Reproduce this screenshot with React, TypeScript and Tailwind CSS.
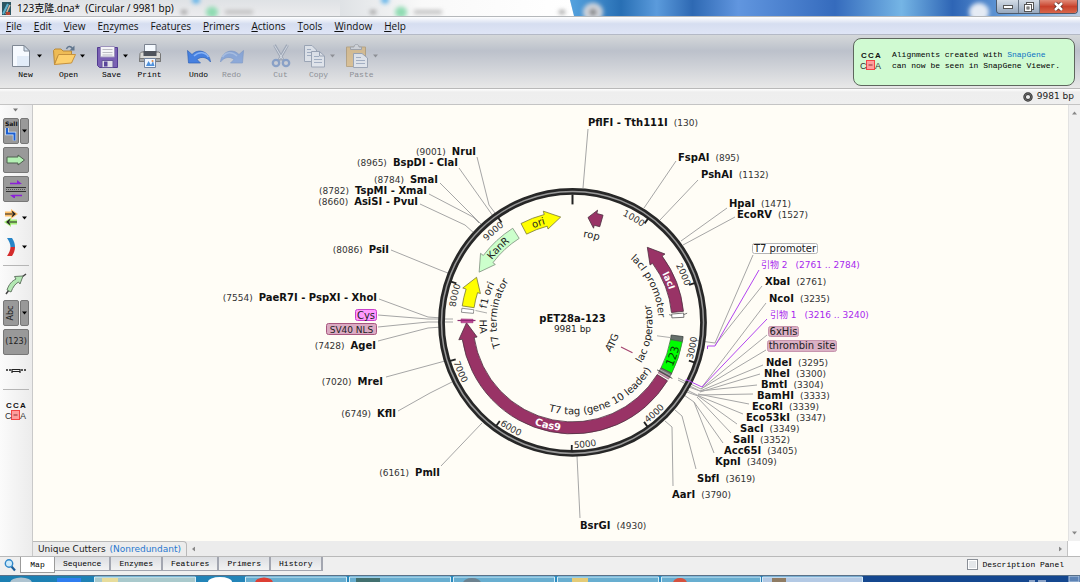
import React from "react";

/* ---------- plasmid geometry ---------- */

const CX = 572.5;
const CY = 322.4;
const TOTAL = 9981;

function pt(r: number, deg: number): [number, number] {
  const a = (deg * Math.PI) / 180;
  return [CX + r * Math.sin(a), CY - r * Math.cos(a)];
}

function p(r: number, deg: number): string {
  const [x, y] = pt(r, deg);
  return `${x.toFixed(2)} ${y.toFixed(2)}`;
}

function bandPath(a0: number, a1: number, r0 = 99.5, r1 = 111.5): string {
  const large = Math.abs(a1 - a0) > 180 ? 1 : 0;
  return `M${p(r1, a0)}A${r1} ${r1} 0 ${large} 1 ${p(r1, a1)}L${p(r0, a1)}A${r0} ${r0} 0 ${large} 0 ${p(r0, a0)}Z`;
}

function arrowPath(tail: number, tip: number, head: number): string {
  const cw = tip > tail;
  const neck = cw ? tip - head : tip + head;
  const s = cw ? 1 : 0;
  const b = cw ? 0 : 1;
  return [
    `M${p(111.5, tail)}`,
    `A111.5 111.5 0 0 ${s} ${p(111.5, neck)}`,
    `L${p(115, neck)}`,
    `L${p(106, tip)}`,
    `L${p(96.5, neck)}`,
    `L${p(99.5, neck)}`,
    `A99.5 99.5 0 0 ${b} ${p(99.5, tail)}`,
    "Z",
  ].join("");
}

type ArcTextProps = {
  id: string;
  r: number;
  at: number;
  ccw?: boolean;
  anchor?: "start" | "middle" | "end";
  size?: number;
  fill?: string;
  bold?: boolean;
  children: string;
};

function ArcText({ id, r, at, ccw, anchor = "middle", size = 10, fill = "#222", bold, children }: ArcTextProps) {
  const d = ccw
    ? `M${p(r, at + 70)}A${r} ${r} 0 0 0 ${p(r, at - 70)}`
    : `M${p(r, at - 70)}A${r} ${r} 0 0 1 ${p(r, at + 70)}`;
  return (
    <>
      <path id={id} d={d} fill="none" />
      <text fontSize={size} fill={fill} fontWeight={bold ? 700 : 400} textAnchor={anchor}>
        <textPath href={`#${id}`} startOffset="50%">
          {children}
        </textPath>
      </text>
    </>
  );
}

/* ---------- map data ---------- */

const ticks = [1000, 2000, 3000, 4000, 5000, 6000, 7000, 8000, 9000];

type Site = { name: string; pos: string; x: number; y: number };

const rightSites: Site[] = [
  { name: "PflFI - Tth111I", pos: "(130)", x: 588, y: 126 },
  { name: "FspAI", pos: "(895)", x: 678, y: 161 },
  { name: "PshAI", pos: "(1132)", x: 701, y: 178 },
  { name: "HpaI", pos: "(1471)", x: 729, y: 207 },
  { name: "EcoRV", pos: "(1527)", x: 737, y: 218 },
  { name: "XbaI", pos: "(2761)", x: 765, y: 285 },
  { name: "NcoI", pos: "(3235)", x: 769, y: 302 },
  { name: "NdeI", pos: "(3295)", x: 766, y: 366 },
  { name: "NheI", pos: "(3300)", x: 764, y: 377 },
  { name: "BmtI", pos: "(3304)", x: 761, y: 388 },
  { name: "BamHI", pos: "(3333)", x: 757, y: 399 },
  { name: "EcoRI", pos: "(3339)", x: 752, y: 410 },
  { name: "Eco53kI", pos: "(3347)", x: 746, y: 421 },
  { name: "SacI", pos: "(3349)", x: 740, y: 432 },
  { name: "SalI", pos: "(3352)", x: 733, y: 443 },
  { name: "Acc65I", pos: "(3405)", x: 724, y: 454 },
  { name: "KpnI", pos: "(3409)", x: 715, y: 465 },
  { name: "SbfI", pos: "(3619)", x: 697, y: 482 },
  { name: "AarI", pos: "(3790)", x: 672, y: 498 },
  { name: "BsrGI", pos: "(4930)", x: 580, y: 529 },
];

const leftSites: Site[] = [
  { name: "NruI", pos: "(9001)", x: 476, y: 155 },
  { name: "BspDI - ClaI", pos: "(8965)", x: 458, y: 166 },
  { name: "SmaI", pos: "(8784)", x: 438, y: 183 },
  { name: "TspMI - XmaI", pos: "(8782)", x: 427, y: 194 },
  { name: "AsiSI - PvuI", pos: "(8660)", x: 418, y: 205 },
  { name: "PsiI", pos: "(8086)", x: 389, y: 253 },
  { name: "PaeR7I - PspXI - XhoI", pos: "(7554)", x: 377, y: 301 },
  { name: "AgeI", pos: "(7428)", x: 376, y: 349 },
  { name: "MreI", pos: "(7020)", x: 383, y: 385 },
  { name: "KflI", pos: "(6749)", x: 396, y: 417 },
  { name: "PmlI", pos: "(6161)", x: 440, y: 476 },
];

const leaders = [
  "477,157 489,205 495,213",
  "459,168 493,216",
  "440,183 481,224",
  "429,194 473,217 479,223",
  "420,204 465,225 474,233",
  "391,250 440,270 448,273",
  "379,299 428,317 442,318",
  "378,315 428,319 453,319",
  "378,327 428,322 453,322",
  "378,341 428,328 442,327",
  "386,377 445,361",
  "398,411 430,393 452,382",
  "441,466 482,423",
  "580,518 577,456",
  "673,486 672,427 665,421",
  "696,469 682,416 675,410",
  "714,453 694,402 684,395",
  "723,443 694,402",
  "731,433 697,397",
  "737,424 698,396 684,391",
  "743,414 699,396 685,389",
  "749,404 698,394",
  "753,394 698,395",
  "757,385 700,391 686,386",
  "760,374 700,392",
  "763,365 700,391 678,380",
  "766,350 701,389",
  "767,335 701,389 678,378",
  "766,303 702,387",
  "762,286 715,345",
  "753,255 715,343 693,340",
  "588,129 583,188",
  "676,161 644,208",
  "698,180 660,220",
  "727,208 681,241",
  "735,217 683,245",
];

function PlasmidMap() {
  return (
    <svg
      viewBox="33 105 1035 436"
      className="h-full w-full"
      fontFamily='"DejaVu Sans", Verdana, "Noto Sans CJK SC", sans-serif'
      role="img"
      aria-label="pET28a-123 plasmid map"
    >
      <g fill="none" stroke="#a6a6a6" strokeWidth="1">
        {leaders.map((l) => (
          <polyline key={l} points={l} />
        ))}
      </g>

      <circle cx={CX} cy={CY} r="131" fill="none" stroke="#272727" strokeWidth="6.8" />
      <circle cx={CX} cy={CY} r="131" fill="none" stroke="#9a9a9a" strokeWidth="1.5" />

      <path d={`M${p(128, 0)}L${p(118, 0)}`} stroke="#222" strokeWidth="2" />
      {ticks.map((t) => {
        const deg = (t / TOTAL) * 360;
        const upper = deg < 90 || deg > 270;
        return (
          <g key={t}>
            <path d={`M${p(129, deg)}L${p(122.5, deg)}`} stroke="#222" strokeWidth="1.8" />
            <ArcText
              id={`tick-${t}`}
              r={upper ? 118 : 125.5}
              at={upper ? deg : deg - 1}
              ccw={!upper}
              anchor={upper ? "end" : "start"}
              size={9}
              fill="#333"
            >
              {String(t)}
            </ArcText>
          </g>
        );
      })}

      <g stroke="#4d3040" strokeWidth="0.8">
        <path d={arrowPath(121.6, 269.8, 8.5)} fill="#993366" />
        <path d={arrowPath(84.3, 44.9, 8.6)} fill="#993366" />
        <path d={arrowPath(15.9, 8.4, 4.2)} fill="#993366" />
      </g>
      <g stroke="#77773a" strokeWidth="0.8" fill="#ffff00">
        <path d={arrowPath(332.5, 353.6, 8.3)} />
        <path d={arrowPath(278.5, 295.2, 7.8)} />
      </g>
      <path d={arrowPath(327.6, 298.3, 8.6)} fill="#ccffcc" stroke="#7d8f7d" strokeWidth="0.8" />

      <path d={bandPath(85.2, 87.4)} fill="#fff" stroke="#555" strokeWidth="0.8" />
      <path d={`M${p(97, 85.4)}L${p(99.5, 86)}M${p(111.5, 86)}L${p(115, 85.4)}`} stroke="#555" strokeWidth="0.8" />
      <path d={bandPath(275.2, 277.3)} fill="#fff" stroke="#777" strokeWidth="0.8" />
      <path d="M475.5 310.5L487 313" stroke="#999" strokeWidth="0.8" />
      <path d={bandPath(269.8, 271.8)} fill="#c4489a" stroke="#993377" strokeWidth="0.6" />
      <path d="M457.5 320.5H475.5" stroke="#8e2a72" strokeWidth="1.2" />

      <path d={bandPath(97.3, 100)} fill="#66706c" stroke="#3e4442" strokeWidth="0.8" />
      <path d={bandPath(100, 117.2)} fill="#00ff00" stroke="#3f7a3f" strokeWidth="0.8" />
      <path d={bandPath(117.2, 119.5)} fill="#777" stroke="#444" strokeWidth="0.8" />
      <path d={bandPath(119.5, 120.6)} fill="#c79bb1" stroke="#80566a" strokeWidth="0.6" />
      <path d={`M${p(99.5, 118.4)}L${p(111.5, 118.4)}`} stroke="#ccc" strokeWidth="0.6" />
      <path d={`M${p(97, 119.3)}L${p(114.5, 119.3)}`} stroke="#444" strokeWidth="0.9" />
      <path d="M657 335.8L670 337.5" stroke="#999" strokeWidth="0.8" />
      <path d="M621 347L632.5 352.7" stroke="#a4436f" strokeWidth="1.2" />

      <g fill="none" stroke="#b244f0" strokeWidth="1">
        <path d="M759 270L715 346H707.5V349" />
        <path d="M767 319L702 387L686 379.5V381" />
      </g>

      <ArcText id="t-laci" r={102} at={66.5} fill="#fff" bold size={9}>lacI</ArcText>
      <ArcText id="t-cas9" r={109} at={193.4} ccw fill="#fff" bold size={10}>Cas9</ArcText>
      <ArcText id="t-ori" r={102} at={341}>ori</ArcText>
      <ArcText id="t-kanr" r={102} at={315}>KanR</ArcText>
      <ArcText id="t-rop" r={86} at={12.4}>rop</ArcText>
      <ArcText id="t-f1" r={87} at={287.7}>f1 ori</ArcText>
      <ArcText id="t-ha" r={93} at={267.4} ccw>HA</ArcText>
      <ArcText id="t-term" r={76} at={277}>T7 terminator</ArcText>
      <ArcText id="t-lacip" r={86} at={64.5}>lacI promoter</ArcText>
      <ArcText id="t-laco" r={80} at={99} ccw>lac operator</ArcText>
      <ArcText id="t-atg" r={48} at={117} ccw>ATG</ArcText>
      <ArcText id="t-123" r={109.5} at={108.5} ccw size={11} fill="#083a08">123</ArcText>
      <ArcText id="t-tag" r={92} at={158} ccw>T7 tag (gene 10 leader)</ArcText>

      <text x={CX} y="322" textAnchor="middle" fontSize="10" fontWeight="700" fill="#111">pET28a-123</text>
      <text x={CX} y="332" textAnchor="middle" fontSize="9" fill="#222">9981 bp</text>

      {rightSites.map((s) => (
        <text key={s.name} x={s.x} y={s.y} fontSize="10" fill="#111">
          <tspan fontWeight="700">{s.name}</tspan>
          <tspan fontSize="9" fill="#333" dx="6">{s.pos}</tspan>
        </text>
      ))}
      {leftSites.map((s) => (
        <text key={s.name} x={s.x} y={s.y} fontSize="10" fill="#111" textAnchor="end">
          <tspan fontSize="9" fill="#333">{s.pos}</tspan>
          <tspan fontWeight="700" dx="6">{s.name}</tspan>
        </text>
      ))}

      <g fontSize="9" fill="#a828ee">
        <text x="761" y="268"><tspan>引物 2</tspan><tspan dx="8">(2761 .. 2784)</tspan></text>
        <text x="770" y="318"><tspan>引物 1</tspan><tspan dx="8">(3216 .. 3240)</tspan></text>
      </g>

      <g fontSize="10" fill="#222">
        <rect x="752.5" y="243.5" width="65" height="10" rx="2" fill="#fff" stroke="#b5b5b5" />
        <text x="785" y="252" textAnchor="middle">T7 promoter</text>
        <rect x="768.5" y="326.5" width="30" height="10" rx="2" fill="#dbb1c5" stroke="#c795ae" />
        <text x="783.5" y="335" textAnchor="middle">6xHis</text>
        <rect x="767.5" y="340.5" width="69" height="11" rx="2" fill="#dbb1c5" stroke="#c795ae" />
        <text x="802" y="349" textAnchor="middle">thrombin site</text>
        <rect x="355.5" y="309.5" width="21" height="11" rx="2" fill="#ff99ff" stroke="#c940c9" />
        <text x="366" y="318.5" textAnchor="middle">Cys</text>
        <rect x="326.5" y="323.5" width="50" height="11" rx="2" fill="#dbaac2" stroke="#a8577f" />
        <text x="351.5" y="332.5" textAnchor="middle" fontSize="9">SV40 NLS</text>
      </g>
    </svg>
  );
}

/* ---------- icons ---------- */

function NewIcon() {
  return (
    <svg width="24" height="24" viewBox="0 0 24 24">
      <path d="M3.5 1.5H15L20.5 7V22.5H3.5Z" fill="#f6faff" stroke="#7f8894" />
      <path d="M8 22V12H20V22Z" fill="#e2ecf8" />
      <path d="M15 1.5V7H20.5Z" fill="#d5e2f0" stroke="#7f8894" strokeLinejoin="round" />
    </svg>
  );
}
function OpenIcon() {
  return (
    <svg width="24" height="24" viewBox="0 0 24 24">
      <path d="M1.5 6.5L3 5h6l2 2h8.5v5H6L2.5 20.5Z" fill="#eebb55" stroke="#b98a3a" />
      <path d="M2.5 20.5L6.5 10.5H23.5L19.5 19Z" fill="#fdd06d" stroke="#c5913e" strokeLinejoin="round" />
      <path d="M14.5 5c1-3 4-3.5 6-.5" fill="none" stroke="#61768e" strokeWidth="1.5" />
      <path d="M22.5 1.5V6.5H17.5Z" fill="#61768e" />
    </svg>
  );
}
function SaveIcon() {
  return (
    <svg width="24" height="24" viewBox="0 0 24 24">
      <path d="M2.5 3.5H22.5V23.5H4.5L2.5 21.5Z" fill="#7a60b4" stroke="#513b90" />
      <path d="M5.5 2.5H19.5V13H5.5Z" fill="#f5f5f8" stroke="#9d93bc" />
      <path d="M7.5 5.5H17.5M7.5 8.5H17.5M7.5 11H17.5" stroke="#bcbcc4" />
      <path d="M7 16.5H18V23.5H7Z" fill="#e0e0e8" stroke="#66589a" />
      <path d="M9 17.5H12.5V22.5H9Z" fill="#59459a" />
    </svg>
  );
}
function PrintIcon() {
  return (
    <svg width="24" height="24" viewBox="0 0 24 24">
      <path d="M6.5 10V.5H18V10" fill="#f5faff" stroke="#7b8390" />
      <path d="M2 9.5L3.5 8H21L22.5 9.5V17.5H1.5Z" fill="#d9d9d6" stroke="#777" />
      <path d="M5.5 7H18.5V12H5.5Z" fill="#4e535c" />
      <path d="M1.5 14.5H22.5V17.5H1.5Z" fill="#a4a6a8" stroke="#777" />
      <path d="M6.5 14.5H17.5V23.5H6.5Z" fill="#f1f7ff" stroke="#7284a0" />
      <path d="M8 22l2.5-5 2.5 4 2-4 1.5 5Z" fill="#4f91dc" />
      <circle cx="14.5" cy="17" r="1" fill="#e08844" />
    </svg>
  );
}
function UndoIcon({ flip }: { flip?: boolean }) {
  return (
    <svg width="24" height="24" viewBox="0 0 24 24" className={flip ? "-scale-x-100 opacity-45" : ""}>
      <path
        d="M.5 6.5L1.5 19H13.5L10 15.5C14 12 20 13 23.5 18C22.5 8 12 3.5 5 10.5Z"
        fill="#4680e0"
        stroke="#2f63b8"
        strokeWidth="0.7"
      />
      <path d="M7 12C12 7 18.5 8 21.5 13" fill="none" stroke="#86b2f5" strokeWidth="1.5" />
    </svg>
  );
}
function CutIcon() {
  return (
    <svg width="24" height="24" viewBox="0 0 24 24" className="opacity-60">
      <path d="M5.5 1L14.5 17M18.5 1L9.5 17" stroke="#8894a8" strokeWidth="3" />
      <path d="M5.5 1.5L13.5 15M18.5 1.5L10.5 15" stroke="#dfe5ee" />
      <circle cx="7" cy="19" r="3.2" fill="none" stroke="#5f83bd" strokeWidth="2.3" />
      <circle cx="17" cy="19" r="3.2" fill="none" stroke="#5f83bd" strokeWidth="2.3" />
    </svg>
  );
}
function Sheet({ d }: { d: string }) {
  return <path d={d} fill="#edf2f9" stroke="#7e8ca2" strokeLinejoin="round" />;
}
function CopyIcon() {
  return (
    <svg width="24" height="24" viewBox="0 0 24 24" className="opacity-60">
      <Sheet d="M2.5 1.5H10L14.5 6V17.5H2.5Z" />
      <path d="M5 5.5H9M5 8.5H9M5 11.5H9" stroke="#8a9cb8" />
      <Sheet d="M9.5 7.5H17.5L22.5 12V23H9.5Z" />
      <path d="M12 12.5H17M12 15.5H20M12 18.5H20" stroke="#8a9cb8" />
      <path d="M17.5 7.5V12H22.5" fill="none" stroke="#7e8ca2" />
    </svg>
  );
}
function PasteIcon() {
  return (
    <svg width="24" height="24" viewBox="0 0 24 24" className="opacity-60">
      <path d="M1.5 3H20.5V22.5H1.5Z" fill="#e0b66e" stroke="#a98a55" />
      <path d="M5.5 5.5V3H9C9-.5 14-.5 14 3H16.5V5.5Z" fill="#d5d8dd" stroke="#888d96" />
      <Sheet d="M8.5 9.5H17L22.5 14V23.5H8.5Z" />
      <path d="M11 13.5H16M11 16.5H20M11 19.5H20" stroke="#8a9cb8" />
    </svg>
  );
}
function Caret({ className = "" }: { className?: string }) {
  return (
    <svg width="5" height="4" viewBox="0 0 5 4" className={className} aria-hidden="true">
      <path d="M0 .5H5L2.5 3.5Z" fill="currentColor" />
    </svg>
  );
}
function AlignIcon() {
  return (
    <svg width="22" height="22" viewBox="0 0 22 22" fontFamily='"Liberation Sans", Arial, sans-serif' fontSize="9" aria-hidden="true">
      <g fontWeight="700" fill="#111" fontSize="8">
        <text x="1" y="9">C</text>
        <text x="8" y="9">C</text>
        <text x="15" y="9">A</text>
      </g>
      <rect x="6.5" y="11.5" width="8" height="9" fill="#ff9d9d" stroke="#f24545" />
      <path d="M8.5 16H12.5" stroke="#833" />
      <g fill="#333">
        <text x="0" y="19.5">C</text>
        <text x="15" y="19.5">A</text>
      </g>
    </svg>
  );
}

/* ---------- window pieces ---------- */

function TitleBar() {
  return (
    <header className="relative flex h-[17px] shrink-0 items-center justify-between overflow-hidden border-b border-[#b5b8bb] bg-linear-to-b from-[#dfe2e5] to-[#ececee] pl-0.5">
      <svg className="absolute inset-0 h-full w-full" viewBox="0 0 1080 17" preserveAspectRatio="none" aria-hidden="true">
        <defs>
          <filter id="soft" x="-20%" y="-60%" width="140%" height="220%">
            <feGaussianBlur stdDeviation="2" />
          </filter>
          <linearGradient id="sheen" x1="0" x2="1" y1="0" y2="0">
            <stop offset="0" stopColor="#dfe2e5" />
            <stop offset=".35" stopColor="#f9f9f9" />
            <stop offset="1" stopColor="#ffffff" />
          </linearGradient>
          <linearGradient id="sky" x1="0" x2="1" y1="0" y2="0">
            <stop offset="0" stopColor="#55a3df" />
            <stop offset=".1" stopColor="#286fb4" />
            <stop offset=".17" stopColor="#5b9bdc" />
            <stop offset=".24" stopColor="#2e69b3" />
            <stop offset=".33" stopColor="#6196df" />
            <stop offset=".52" stopColor="#356bbd" />
            <stop offset=".65" stopColor="#75b5e5" />
            <stop offset=".75" stopColor="#2e65b5" />
            <stop offset=".88" stopColor="#72a9e2" />
            <stop offset="1" stopColor="#b7c9e0" />
          </linearGradient>
        </defs>
        <path d="M340 0H570L574 17H340Z" fill="url(#sheen)" />
        <path d="M570 0H1080V17H574Z" fill="url(#sky)" />
        <g filter="url(#soft)">
          <circle cx="212" cy="13" r="6" fill="#8fdcb2" />
          <circle cx="401" cy="13" r="6" fill="#8fdcb2" />
          <circle cx="196" cy="0" r="4" fill="#66b6ea" />
          <circle cx="385" cy="0" r="4" fill="#66b6ea" />
          <path d="M225 11H253V15H225ZM414 11H442V15H414Z" fill="#bbb" />
          <path d="M181 11H187V15H181ZM370 11H376V15H370ZM559 11H565V15H559Z" fill="#999" />
          <circle cx="593" cy="13" r="10" fill="#d3d6dc" />
          <circle cx="979" cy="13" r="10" fill="#e5ebf4" />
          <path d="M589 13H597M593 9V17" stroke="#777" strokeWidth="3" />
        </g>
      </svg>
      <div className="relative flex items-center gap-1.5">
        <svg width="9" height="13" viewBox="0 0 9 13" aria-hidden="true">
          <rect width="9" height="13" fill="#2b5663" />
          <path d="M1 12L6 2" stroke="#5fb3d0" strokeWidth="2" />
          <path d="M4 12L8 3" stroke="#d7b59c" strokeWidth="1.5" />
          <path d="M4 10H8V13H4Z" fill="#b24734" />
        </svg>
        <h1 className="whitespace-pre text-[10px] leading-4 text-black">123克隆.dna*  (Circular / 9981 bp)</h1>
      </div>
      <div className="relative mr-0.5 flex h-[14px] self-start overflow-hidden rounded-b border border-t-0 border-[#4d5a6b]">
        <button aria-label="Minimize" className="flex w-[22px] items-center justify-center border-r border-[#6a7686] bg-linear-to-b from-[#d5dde7] to-[#97a8bd]">
          <svg width="10" height="4"><rect x=".5" y=".5" width="9" height="3" fill="#fff" stroke="#555" /></svg>
        </button>
        <button aria-label="Restore" className="flex w-[21px] items-center justify-center border-r border-[#6a7686] bg-linear-to-b from-[#d5dde7] to-[#97a8bd]">
          <svg width="10" height="10" fill="#fff" stroke="#555">
            <rect x="2.5" y=".5" width="7" height="7" />
            <rect x=".5" y="2.5" width="7" height="7" />
            <rect x="3" y="5" width="2" height="2" />
          </svg>
        </button>
        <button aria-label="Close" className="flex w-[37px] items-center justify-center bg-linear-to-b from-[#e08a78] via-[#c8412c] to-[#d8664a]">
          <svg width="11" height="9" viewBox="0 0 11 9">
            <path d="M2 1L9 8M9 1L2 8" stroke="#5a2a25" strokeWidth="4" />
            <path d="M2 1L9 8M9 1L2 8" stroke="#fff" strokeWidth="2.5" />
          </svg>
        </button>
      </div>
    </header>
  );
}

const menus: [string, string, string][] = [
  ["", "F", "ile"],
  ["", "E", "dit"],
  ["", "V", "iew"],
  ["E", "n", "zymes"],
  ["Featu", "r", "es"],
  ["", "P", "rimers"],
  ["", "A", "ctions"],
  ["", "T", "ools"],
  ["", "W", "indow"],
  ["", "H", "elp"],
];

function MenuBar() {
  return (
    <nav className="flex h-[18px] shrink-0 items-center border-b border-[#b4b9c6] bg-linear-to-b from-white via-[#d6def0] via-40% to-[#dfe5f6]">
      {menus.map(([a, b, c]) => (
        <button key={a + b + c} className="px-1.5 text-[10px] leading-4 text-[#111]">
          {a}
          <span className="underline underline-offset-1">{b}</span>
          {c}
        </button>
      ))}
    </nav>
  );
}

type ToolProps = { label: string; icon: React.ReactNode; menu?: boolean; off?: boolean };

function Tool({ label, icon, menu, off }: ToolProps) {
  return (
    <button
      disabled={off}
      className={
        "flex flex-col items-center gap-[2px] " + (menu ? "w-[43px] " : "w-[33px] ") + (off ? "text-[#8d9096]" : "text-black")
      }
    >
      <span className="flex items-center gap-1">
        {icon}
        {menu && <Caret />}
      </span>
      <span className="font-['Liberation_Mono',monospace] text-[8px] leading-[10px]">{label}</span>
    </button>
  );
}

function Toolbar() {
  return (
    <div className="flex h-[54px] shrink-0 items-start justify-between border-b border-[#b9b9b9] bg-linear-to-b from-[#d5d8da] via-[#bcc1cb] via-30% to-[#e8e8e8] pt-[3px] pr-[5px] pl-1">
      <div className="flex gap-4 pt-[6px]">
        <div className="flex">
          <Tool label="New" icon={<NewIcon />} menu />
          <Tool label="Open" icon={<OpenIcon />} menu />
          <Tool label="Save" icon={<SaveIcon />} menu />
          <Tool label="Print" icon={<PrintIcon />} />
        </div>
        <div className="flex">
          <Tool label="Undo" icon={<UndoIcon />} />
          <Tool label="Redo" icon={<UndoIcon flip />} off />
        </div>
        <div className="flex">
          <Tool label="Cut" icon={<CutIcon />} off />
          <Tool label="Copy" icon={<CopyIcon />} menu off />
          <Tool label="Paste" icon={<PasteIcon />} menu off />
        </div>
      </div>
      <aside className="flex h-12 w-[222px] gap-2.5 rounded-lg border border-[#5e665e] bg-[#d0fad2] px-1.5 pt-[10px]">
        <AlignIcon />
        <p className="font-['Liberation_Mono',monospace] text-[8px] leading-[11px] whitespace-nowrap text-black">
          Alignments created with <a href="#snapgene" className="text-[#0b73c4]">SnapGene</a>
          <br />
          can now be seen in SnapGene Viewer.
        </p>
      </aside>
    </div>
  );
}

function SideButton({ label, pressed, children }: { label: string; pressed?: boolean; children: React.ReactNode }) {
  return (
    <button
      aria-label={label}
      className={
        "flex h-[26px] w-[26px] items-center justify-center rounded-xs border " +
        (pressed ? "border-[#777] bg-[#999]" : "border-transparent")
      }
    >
      {children}
    </button>
  );
}

function SplitButton({ label, pressed, children }: { label: string; pressed?: boolean; children: React.ReactNode }) {
  const skin = pressed ? "border-[#777] bg-[#999]" : "border-transparent";
  return (
    <div className="flex h-[26px] w-[26px] gap-px">
      <button aria-label={label} className={"flex w-4 items-center justify-center rounded-xs border " + skin}>
        {children}
      </button>
      <button aria-label={label + " options"} className={"flex w-[9px] items-center justify-center rounded-xs border text-black " + skin}>
        <Caret className="shrink-0" />
      </button>
    </div>
  );
}

function SideBar() {
  return (
    <aside className="flex w-[33px] shrink-0 flex-col gap-[3px] border-r border-[#c9c9c9] bg-linear-to-r from-[#fbfbfb] to-[#ececec] pl-[3px]">
      <div className="flex h-[10px] w-6 items-center justify-center text-[#777]">
        <Caret />
      </div>
      <SplitButton label="Show enzymes" pressed>
        <svg width="14" height="24" viewBox="0 0 14 24" className="shrink-0">
          <text x="1" y="7" fontSize="6" fontWeight="700" fontFamily='"DejaVu Sans", sans-serif' fill="#111">SalI</text>
          <path d="M3 9V14.5H10.5V21.5" fill="none" stroke="#dbeaff" strokeWidth="3.4" />
          <path d="M3 9V14.5H10.5V21.5" fill="none" stroke="#1c5fd0" strokeWidth="2" />
        </svg>
      </SplitButton>
      <SideButton label="Show features" pressed>
        <svg width="20" height="12" viewBox="0 0 20 12">
          <path d="M1 3H12V1L18.5 6L12 11V9H1Z" fill="#b3f0b3" stroke="#4f5f4f" />
        </svg>
      </SideButton>
      <SideButton label="Show primers" pressed>
        <svg width="20" height="18" viewBox="0 0 20 18">
          <path d="M0 7.5H20M0 11.5H20" stroke="#333" />
          <path d="M0 9.5H20" stroke="#555" strokeDasharray="1 1" />
          <path d="M4 3.5H14M6 15.5H16" stroke="#8a20d8" strokeWidth="1.3" />
          <path d="M11 0L16 4H11ZM9 19L4 15H9Z" fill="#8a20d8" />
        </svg>
      </SideButton>
      <SplitButton label="Show ORFs">
        <svg width="14" height="18" viewBox="0 0 14 18" className="shrink-0">
          <path d="M1 5H9" stroke="#ffc069" strokeWidth="5" />
          <path d="M7 0L14 5L7 10Z" fill="#ffc069" />
          <path d="M5 13H13" stroke="#a5ef78" strokeWidth="5" />
          <path d="M7 8.5L0 13L7 18Z" fill="#a5ef78" />
          <path d="M1 5H11M8 2.5L11 5L8 7.5M13 13H3M6 10.5L3 13L6 15.5" fill="none" stroke="#222" strokeWidth="1.2" />
        </svg>
      </SplitButton>
      <SplitButton label="Show colors">
        <svg width="12" height="20" viewBox="0 0 12 20" className="shrink-0">
          <path d="M2 1H7C9 4 10 7 10 10H5.500C5.500 7 4 4 2 1Z" fill="#2685c8" />
          <path d="M10 10C10 13 9 16 7 19H2C4 16 5.500 13 5.500 10Z" fill="#d42c2c" />
        </svg>
      </SplitButton>
      <hr className="my-0.5 w-[26px] border-[#b5b5b5]" />
      <SideButton label="Feature style">
        <svg width="22" height="22" viewBox="0 0 22 22" className="shrink-0">
          <path d="M1 21L4 17M17 4L21 1" stroke="#444" strokeWidth="1.5" />
          <path d="M2 17C4 11 7 8 11 6L9.5 3.5L18 3L15 11L13.5 9C10 11 8 14 6 19Z" fill="#b3e8b3" stroke="#667a66" />
        </svg>
      </SideButton>
      <SplitButton label="Show labels" pressed>
        <span className="-rotate-90 font-['DejaVu_Sans',sans-serif] text-[8px] leading-none text-[#222]">Abc</span>
      </SplitButton>
      <SideButton label="Show locations" pressed>
        <span className="font-['DejaVu_Sans',sans-serif] text-[8px] leading-none text-[#222]">(123)</span>
      </SideButton>
      <SideButton label="Collapse">
        <svg width="22" height="6" viewBox="0 0 22 6" className="shrink-0">
          <path d="M1 2H3M4 2H6M16 2H18M19 2H21" stroke="#222" strokeWidth="1.5" />
          <path d="M7 5V1.5H15V5M7 3.5H15" fill="none" stroke="#222" strokeWidth="1.2" />
        </svg>
      </SideButton>
      <hr className="my-0.5 w-[26px] border-[#b5b5b5]" />
      <button aria-label="Show alignments" className="flex h-[30px] w-[26px] items-center justify-center">
        <AlignIcon />
      </button>
    </aside>
  );
}

const tabs = ["Map", "Sequence", "Enzymes", "Features", "Primers", "History"];

function BottomBar() {
  return (
    <footer className="flex h-[19px] shrink-0 items-start justify-between border-t border-[#b9b9b9] bg-[#efefef] font-['Liberation_Mono',monospace] text-[8px] text-black">
      <div className="flex">
        <button aria-label="Zoom" className="flex w-5 items-center justify-center">
          <svg width="12" height="14" viewBox="0 0 12 14">
            <path d="M7.5 8.5L11 12.5" stroke="#1c5d98" strokeWidth="2.2" />
            <circle cx="5" cy="5.5" r="3.7" fill="#cdeafa" stroke="#2f86c8" strokeWidth="1.4" />
          </svg>
        </button>
        <div role="tablist" className="flex items-start">
          {tabs.map((t, i) => (
            <button
              key={t}
              role="tab"
              aria-selected={i === 0}
              className={
                i === 0
                  ? "h-4 w-[35px] border border-t-0 border-[#9b9b9b] bg-white"
                  : "h-[14px] border-r-2 border-b border-[#a3a6b0] bg-linear-to-b from-[#dcdee2] to-[#f3f3f3] px-2"
              }
            >
              {t}
            </button>
          ))}
        </div>
      </div>
      <label className="flex h-[15px] items-center gap-1 pr-4">
        <input type="checkbox" className="h-[11px] w-[11px] appearance-none border border-[#8a8f96] bg-[#e4e7ea] shadow-[inset_0_0_0_1px_#fff]" />
        Description Panel
      </label>
    </footer>
  );
}

function TaskBar() {
  return (
    <div className="h-[7px] shrink-0 overflow-hidden border-t border-[#5a7188] bg-linear-to-r from-[#1b7fb2] via-[#2f8fc4] via-60% to-[#123f86]">
      <svg className="h-full w-full" viewBox="0 0 1080 6" preserveAspectRatio="none" aria-hidden="true">
        <path d="M862 0H1080V6H862Z" fill="#14478f" />
        <g stroke="#d4ecf7" fill="#68aed0">
          <path d="M94.5 7V1H195.5V7" fill="#a9c9cc" />
          <path d="M245.5 7V1H346.5V7" />
          <path d="M349.5 7V1H450.5V7" />
          <path d="M453.5 7V1H554.5V7" />
          <path d="M557.5 7V1H658.5V7" />
          <path d="M661.5 7V1H760.5V7" />
          <path d="M762.5 7V1H862.5V7" fill="#b3c9e4" />
        </g>
        <ellipse cx="21" cy="7" rx="11" ry="5.5" fill="#adc3d0" />
        <path d="M57 2H81V6H57Z" fill="#2f7df0" />
        <path d="M102 2H118V6H102Z" fill="#e7dc9b" />
        <ellipse cx="220" cy="6" rx="12" ry="5" fill="#fff" />
        <ellipse cx="264" cy="7" rx="9" ry="5.5" fill="#dd3f34" />
        <path d="M356 2H380V6H356Z" fill="#41706f" />
        <ellipse cx="472" cy="7" rx="9" ry="5" fill="#6c8290" />
        <path d="M572 2H588V6H572Z" fill="#e4cb76" />
        <ellipse cx="680" cy="7" rx="7" ry="5" fill="#d5523f" />
        <path d="M772 2H786V6H772Z" fill="#8f7c64" />
        <path d="M1029 5H1035M1038 5H1046" stroke="#fff" />
        <path d="M1069 0H1079V6H1069Z" fill="#5d83b5" stroke="#b7cbe3" />
      </svg>
    </div>
  );
}

export default function App() {
  return (
    <div className="flex h-screen flex-col overflow-hidden bg-[#efefef] font-['Open_Sans','Noto_Sans_CJK_SC',sans-serif]">
      <TitleBar />
      <MenuBar />
      <Toolbar />
      <div className="flex h-4 shrink-0 items-center justify-end gap-1 border-b border-[#c4c4c4] bg-linear-to-b from-white via-[#eeeeee] via-20% to-[#efefef] pr-1.5 font-['DejaVu_Sans',sans-serif] text-[9px] text-[#222]">
        <svg width="10" height="10" viewBox="0 0 10 10" aria-hidden="true">
          <circle cx="5" cy="5" r="3.4" fill="none" stroke="#333" strokeWidth="2.6" />
          <circle cx="5" cy="5" r="3.4" fill="none" stroke="#999" strokeWidth="0.6" />
        </svg>
        9981 bp
      </div>
      <main className="flex min-h-0 flex-1">
        <SideBar />
        <div className="flex min-w-0 flex-1 flex-col">
          <div className="flex min-h-0 flex-1">
            <div className="min-w-0 flex-1 bg-[#fffdf6]">
              <PlasmidMap />
            </div>
            <div className="flex w-3 flex-col items-center justify-between border-l border-[#e2e2e2] bg-[#f1f1f1] py-1.5 text-[#888]">
              <Caret className="rotate-180" />
              <Caret />
            </div>
          </div>
          <div className="flex h-[15px] shrink-0 bg-[#ececec]">
            <div className="rounded-tr border-t border-r border-[#b9b9b9] px-[5px] font-['DejaVu_Sans',sans-serif] text-[9px] leading-[15px] whitespace-nowrap text-[#222]">
              Unique Cutters <a href="#nonredundant" className="ml-px text-[#2878cf]">(Nonredundant)</a>
            </div>
            <div className="flex flex-1 items-center justify-between px-1 text-[#888]">
              <Caret className="rotate-90" />
              <Caret className="-rotate-90" />
            </div>
            <div className="w-[13px] border-l border-[#c4c4c4] bg-white" />
          </div>
        </div>
      </main>
      <BottomBar />
      <TaskBar />
    </div>
  );
}
